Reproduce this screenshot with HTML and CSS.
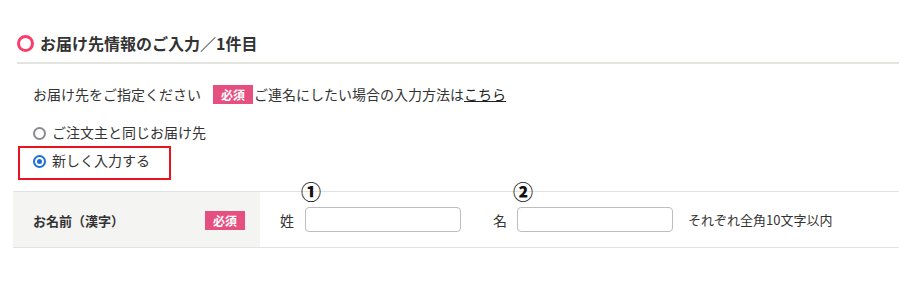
FILE: index.html
```html
<!DOCTYPE html>
<html lang="ja">
<head>
<meta charset="utf-8">
<title>お届け先情報</title>
<link rel="stylesheet" href="styles.css">
</head>
<body>
<div class="wrap">
  <h2 class="heading"><span class="ring"></span>お届け先情報のご入力／1件目</h2>

  <div class="intro">
    <span>お届け先をご指定ください</span>
    <span class="badge">必須</span>
    <span>ご連名にしたい場合の入力方法は<a class="link" href="#">こちら</a></span>
  </div>

  <label class="radio-row">
    <span class="radio"></span>ご注文主と同じお届け先
  </label>
  <label class="radio-row boxed">
    <span class="radio checked"></span>新しく入力する
  </label>

  <div class="table-row">
    <div class="th">
      <span class="th-label">お名前（漢字）</span>
      <span class="badge">必須</span>
    </div>
    <div class="td">
      <span class="field-label">姓</span>
      <span class="input-wrap"><span class="num">①</span><span class="input"></span></span>
      <span class="field-label second">名</span>
      <span class="input-wrap"><span class="num">②</span><span class="input"></span></span>
      <span class="note">それぞれ全角10文字以内</span>
    </div>
  </div>
</div>
</body>
</html>
```

FILE: styles.css
```css
* { box-sizing: border-box; }
body {
  margin: 0;
  background: #fff;
  color: #333;
  font-family: "Noto Sans CJK JP", "Noto Sans", sans-serif;
}
.wrap {
  margin-left: 13px;
  width: 886px;
}
.heading {
  margin: 0 0 0 4px;
  padding: 31px 0 7px;
  display: flex;
  align-items: center;
  gap: 6px;
  font-size: 16px;
  line-height: 24px;
  font-weight: bold;
  color: #333;
  border-bottom: 2px solid #e4e4df;
}
.ring {
  flex: none;
  display: block;
  width: 17px;
  height: 17px;
  border: 3.5px solid #fc3d6c;
  border-radius: 50%;
}
.intro {
  margin-top: 20px;
  padding-left: 20px;
  display: flex;
  align-items: center;
  font-size: 14px;
  line-height: 20px;
}
.intro .badge { margin-left: 12px; margin-right: 1px; }
.badge {
  flex: none;
  display: inline-flex;
  align-items: center;
  justify-content: center;
  width: 40px;
  height: 19px;
  background: #e55080;
  color: #fff;
  font-size: 12px;
  font-weight: bold;
  line-height: 19px;
}
.link { color: #222; text-decoration: underline; }
.radio-row {
  display: flex;
  align-items: center;
  gap: 6px;
  font-size: 14px;
  line-height: 20px;
  margin-top: 18px;
  padding-left: 20px;
}
.radio {
  flex: none;
  width: 13px;
  height: 13px;
  border: 2px solid #8a8a90;
  border-radius: 50%;
  position: relative;
  top: 1px;
}
.radio.checked {
  border-color: #1a6fd8;
}
.radio.checked::after {
  content: "";
  position: absolute;
  left: 2px;
  top: 2px;
  width: 5px;
  height: 5px;
  border-radius: 50%;
  background: #1a6fd8;
}
.boxed {
  margin: 4px 0 0 5px;
  width: 153px;
  padding: 2px 0 8px 13px;
  border: 2px solid #e8141e;
}
.table-row {
  margin-top: 11px;
  display: flex;
  height: 57px;
  border-top: 1px solid #e2e2e2;
  border-bottom: 1px solid #e2e2e2;
}
.th {
  width: 247px;
  background: #f4f4f2;
  display: flex;
  align-items: center;
  justify-content: space-between;
  padding: 1px 15px 0 20px;
}
.th-label {
  font-size: 13px;
  font-weight: bold;
}
.td {
  flex: 1;
  display: flex;
  align-items: center;
  padding-left: 20px;
  font-size: 14px;
}
.field-label {
  width: 15px;
  margin-right: 10px;
}
.field-label.second { margin-left: 32px; margin-right: 9px; }
.input-wrap {
  position: relative;
  display: block;
}
.input {
  display: block;
  width: 156px;
  height: 25px;
  border: 1px solid #bdbdbd;
  border-radius: 4px;
  background: #fff;
}
.num {
  position: absolute;
  left: -4px;
  top: -27px;
  font-size: 20px;
  line-height: 24px;
  font-weight: 900;
  color: #111;
}
.note {
  margin-left: 15px;
  font-size: 13px;
}
```
